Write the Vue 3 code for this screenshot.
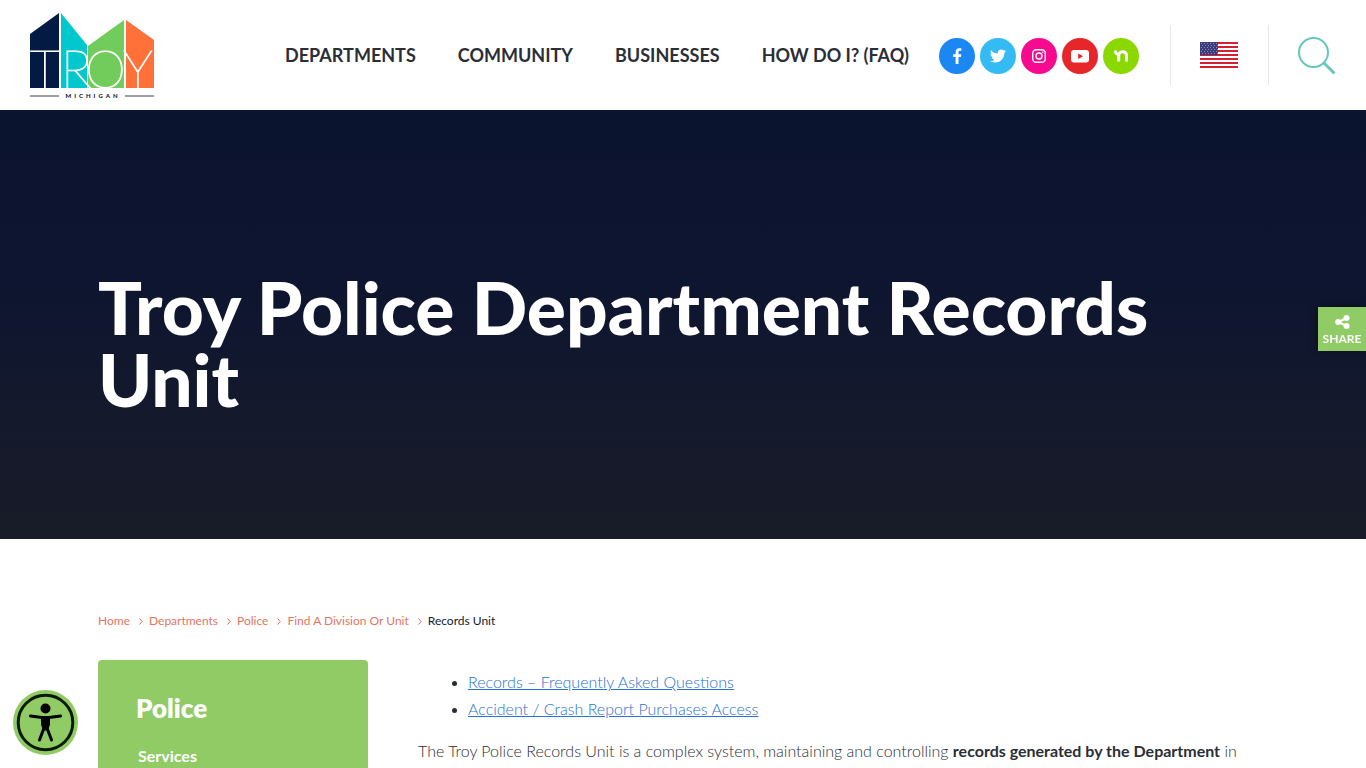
<script setup>
const navItems = ['DEPARTMENTS', 'COMMUNITY', 'BUSINESSES', 'HOW DO I? (FAQ)']
const crumbs = ['Home', 'Departments', 'Police', 'Find A Division Or Unit']
const resources = ['Records – Frequently Asked Questions', 'Accident / Crash Report Purchases Access']
const stripes = [0, 1, 2, 3, 4, 5, 6]
const stars = []
for (let row = 0; row < 6; row++) {
  for (let col = 0; col < 6; col++) {
    stars.push({ x: 1 + col * 3 + (row % 2 ? 1 : 0), y: 1 + row * 2 })
  }
}
</script>

<template>
  <div class="page">
    <header class="header">
      <a class="logo" href="#" aria-label="Troy Michigan">
        <svg width="126" height="86" viewBox="0 0 126 86">
          <polygon points="0,22 29,1 29,76 0,76" fill="#031b42" />
          <polygon points="31,1 57,33 57,76 31,76" fill="#00c8cd" />
          <polygon points="58,34 94,8 94,76 58,76" fill="#72cc5c" />
          <polygon points="96,8 124,28 124,76 96,76" fill="#ff7139" />
          <text class="logo-letters" x="0 31 55 93" y="76">TROY</text>
          <path d="M0 84H29M95 84H124" stroke="#3c4148" stroke-width="1" />
          <text class="logo-state" x="63" y="86" text-anchor="middle">MICHIGAN</text>
        </svg>
      </a>

      <nav class="nav" aria-label="Main">
        <a v-for="item in navItems" :key="item" href="#">{{ item }}</a>
      </nav>

      <div class="social">
        <a class="facebook" href="#" aria-label="Facebook">
          <svg width="18" height="18" viewBox="0 0 18 18"><path d="M7.6 17V10H5.2V7.2h2.4V5.1C7.6 2.5 9.100 1.200 11.300 1.200c1 0 1.900.1 2.100.1v2.500h-1.400c-1.200 0-1.500.6-1.500 1.400v2h2.800L12.900 10h-2.400v7z" fill="#fff" /></svg>
        </a>
        <a class="twitter" href="#" aria-label="Twitter">
          <svg width="16" height="16" viewBox="0 0 512 512"><path d="M459 152c0 4 0 9 0 14 0 139-106 299-299 299-59 0-115-17-161-47 8 1 16 1 25 1 49 0 94-17 130-45-46-1-85-31-98-73 6 1 13 2 20 2 9 0 19-1 28-4-48-10-84-52-84-103v-1c14 8 30 13 47 13-28-19-47-51-47-87 0-19 5-37 14-53 52 64 130 105 217 110-2-8-3-16-3-24 0-58 47-105 105-105 30 0 58 13 77 33 24-5 46-13 67-25-8 24-24 45-46 58 21-2 42-8 61-16-14 21-32 39-53 53z" fill="#fff" /></svg>
        </a>
        <a class="instagram" href="#" aria-label="Instagram">
          <svg width="16" height="16" viewBox="0 0 16 16" fill="none" stroke="#fff" stroke-width="1.400"><rect x="1.700" y="1.700" width="12.600" height="12.600" rx="3.600" /><circle cx="8" cy="8" r="3" /><circle cx="11.700" cy="4.300" r=".8" fill="#fff" stroke="none" /></svg>
        </a>
        <a class="youtube" href="#" aria-label="YouTube">
          <svg width="18" height="14" viewBox="0 0 18 14"><rect y="1" width="18" height="12.500" rx="3" fill="#fff" /><path d="M7.200 4.400v5.600l4.900-2.800z" fill="#e62628" /></svg>
        </a>
        <a class="nextdoor" href="#" aria-label="Nextdoor">
          <svg width="14" height="12" viewBox="0 0 14 12"><path d="M0 .5h2.800c0 1.200.4 2 1.300 2.300C5 1.200 6.600.3 8.600.3c3.200 0 5.400 2 5.400 5V11.500h-3V5.700C11 4.200 10.100 3.200 8.600 3.200S6.200 4.200 6.200 5.700v5.800h-3V5.600C1.100 5.200 0 3.500 0 .5z" fill="#fff" /></svg>
        </a>
      </div>

      <div class="tool">
        <button type="button" aria-label="Choose language">
          <svg width="38" height="26" viewBox="0 0 38 26">
            <rect width="38" height="26" fill="#fff" />
            <rect v-for="s in stripes" :key="s" :y="s * 4" width="38" height="2" fill="#d32034" />
            <rect width="18" height="13" fill="#3c3b7e" />
            <rect v-for="(s, i) in stars" :key="i" :x="s.x" :y="s.y" width="1" height="1" fill="#8988b8" />
          </svg>
        </button>
      </div>
      <div class="tool">
        <button type="button" aria-label="Search">
          <svg width="38" height="40" viewBox="0 0 38 40" fill="none">
            <circle cx="15.500" cy="17.500" r="14.500" stroke="#67c7bb" stroke-width="2" />
            <path d="M26 28L36.500 38.500" stroke="#67c7bb" stroke-width="3" />
          </svg>
        </button>
      </div>
    </header>

    <section class="hero">
      <h1>Troy Police Department Records Unit</h1>
    </section>

    <main class="content">
      <nav class="crumbs" aria-label="Breadcrumb">
        <template v-for="c in crumbs" :key="c">
          <a href="#">{{ c }}</a>
          <svg width="4" height="7" viewBox="0 0 4 7"><path d="M.5.5l2.700 3-2.700 3" fill="none" stroke="#e8694f" /></svg>
        </template>
        <span>Records Unit</span>
      </nav>
      <div class="columns">
        <aside class="side">
          <h2>Police</h2>
          <a href="#">Services</a>
        </aside>
        <article class="article">
          <ul>
            <li v-for="r in resources" :key="r"><a href="#">{{ r }}</a></li>
          </ul>
          <p>The Troy Police Records Unit is a complex system, maintaining and controlling <strong>records generated by the Department</strong> in</p>
        </article>
      </div>
    </main>

    <button class="share" type="button">
      <svg width="15" height="14" viewBox="0 0 15 14"><path d="M11.500 3L3.500 7l8 4" fill="none" stroke="#fff" stroke-width="2" /><circle cx="11.500" cy="3" r="3" fill="#fff" /><circle cx="3.200" cy="7" r="3" fill="#fff" /><circle cx="11.500" cy="11" r="3" fill="#fff" /></svg>
      <span>SHARE</span>
    </button>
    <button class="access" type="button" aria-label="Accessibility options">
      <svg width="65" height="65" viewBox="0 0 65 65">
        <circle cx="32.500" cy="32.500" r="32.500" fill="#90cb66" />
        <circle cx="32.500" cy="32.500" r="27.300" fill="none" stroke="#0a1a05" stroke-width="3" />
        <circle cx="32.500" cy="18.500" r="5" />
        <path d="M17.500 26L29 27.500h7L47.500 26M26.500 50L31 38v-9M38.500 50L34 38v-9" fill="none" stroke="#000" stroke-width="3" stroke-linecap="round" stroke-linejoin="round" />
        <path d="M28 26.500h9v8l-2 6h-5l-2-6z" />
      </svg>
    </button>
  </div>
</template>

<style>
html,
body {
  margin: 0;
  background: #fff;
}
</style>

<style scoped>
.page {
  height: 100vh;
  overflow: hidden;
  font-family: Lato, "Liberation Sans", sans-serif;
  color: #2a2e36;
}
a {
  color: inherit;
  text-decoration: none;
}
svg {
  display: block;
}
button {
  padding: 0;
  border: 0;
  background: none;
  font: inherit;
  cursor: pointer;
}
.header {
  display: flex;
  align-items: center;
  height: 110px;
  padding: 0 30px;
}
.logo {
  margin-right: auto;
}
.logo-letters {
  font-size: 52px;
  font-weight: 200;
  fill: #fff;
  stroke: #fff;
  stroke-width: 1px;
}
.logo-state {
  font-size: 6px;
  font-weight: 900;
  letter-spacing: 3px;
  fill: #1c222c;
}
.nav {
  display: flex;
  gap: 42px;
  font-size: 18px;
  font-weight: 700;
  line-height: 24px;
  white-space: nowrap;
}
.social {
  display: flex;
  gap: 5px;
  margin: 2px 31px 0 30px;
}
.social a {
  display: flex;
  align-items: center;
  justify-content: center;
  width: 36px;
  height: 36px;
  border-radius: 50%;
}
.facebook {
  background: #1b87f2;
}
.twitter {
  background: #35bbf4;
}
.instagram {
  background: #f70a8d;
}
.youtube {
  background: #e62628;
}
.nextdoor {
  background: #8bd800;
}
.tool {
  display: flex;
  align-items: center;
  height: 60px;
  padding: 0 30px 0 29px;
  border-left: 1px solid #e6e6e6;
}
.tool:last-child {
  padding-right: 0;
}
.hero {
  display: flex;
  align-items: center;
  min-height: 429px;
  box-sizing: border-box;
  padding: 36px 98px 0;
  background: linear-gradient(#0b142f, #0e1530 40%, #191c28);
}
.hero h1 {
  margin: 0;
  color: #fff;
  font-size: 73px;
  font-weight: 900;
  line-height: 72px;
}
.content {
  padding: 72px 98px 0;
}
.crumbs {
  display: flex;
  align-items: center;
  font-size: 12px;
  line-height: 20px;
  color: #e2765f;
}
.crumbs svg {
  margin: 0 6px 0 9px;
}
.crumbs span {
  color: #0d2330;
}
.columns {
  display: grid;
  grid-template-columns: 270px 1fr;
  gap: 50px;
  margin-top: 29px;
}
.side {
  min-height: 300px;
  padding: 32px 40px;
  box-sizing: border-box;
  border-radius: 4px 4px 0 0;
  background: #90cb66;
  color: #fff;
  font-weight: 700;
}
.side h2 {
  margin: 0 0 20px -2px;
  font-size: 26px;
  font-weight: 800;
  line-height: 32px;
}
.side a {
  font-size: 16px;
  line-height: 24px;
}
.article {
  font-size: 16px;
  font-weight: 300;
  line-height: 27px;
}
.article ul {
  margin: 8px 0 15px;
  padding-left: 50px;
}
.article li::marker {
  font-size: 14px;
}
.article li a {
  color: #2a72d4;
  text-decoration: underline;
}
.article p {
  margin: 0;
}
.article strong {
  font-weight: 700;
}
.share {
  position: fixed;
  top: 307px;
  right: 0;
  display: flex;
  flex-direction: column;
  align-items: center;
  gap: 3px;
  width: 48px;
  height: 44px;
  padding-top: 8px;
  background: #90cb66;
  color: #fff;
  font-size: 12px;
  font-weight: 700;
  line-height: 14px;
  box-shadow: 0 0 8px #00000066;
}
.access {
  position: fixed;
  left: 13px;
  bottom: 13px;
}
</style>
